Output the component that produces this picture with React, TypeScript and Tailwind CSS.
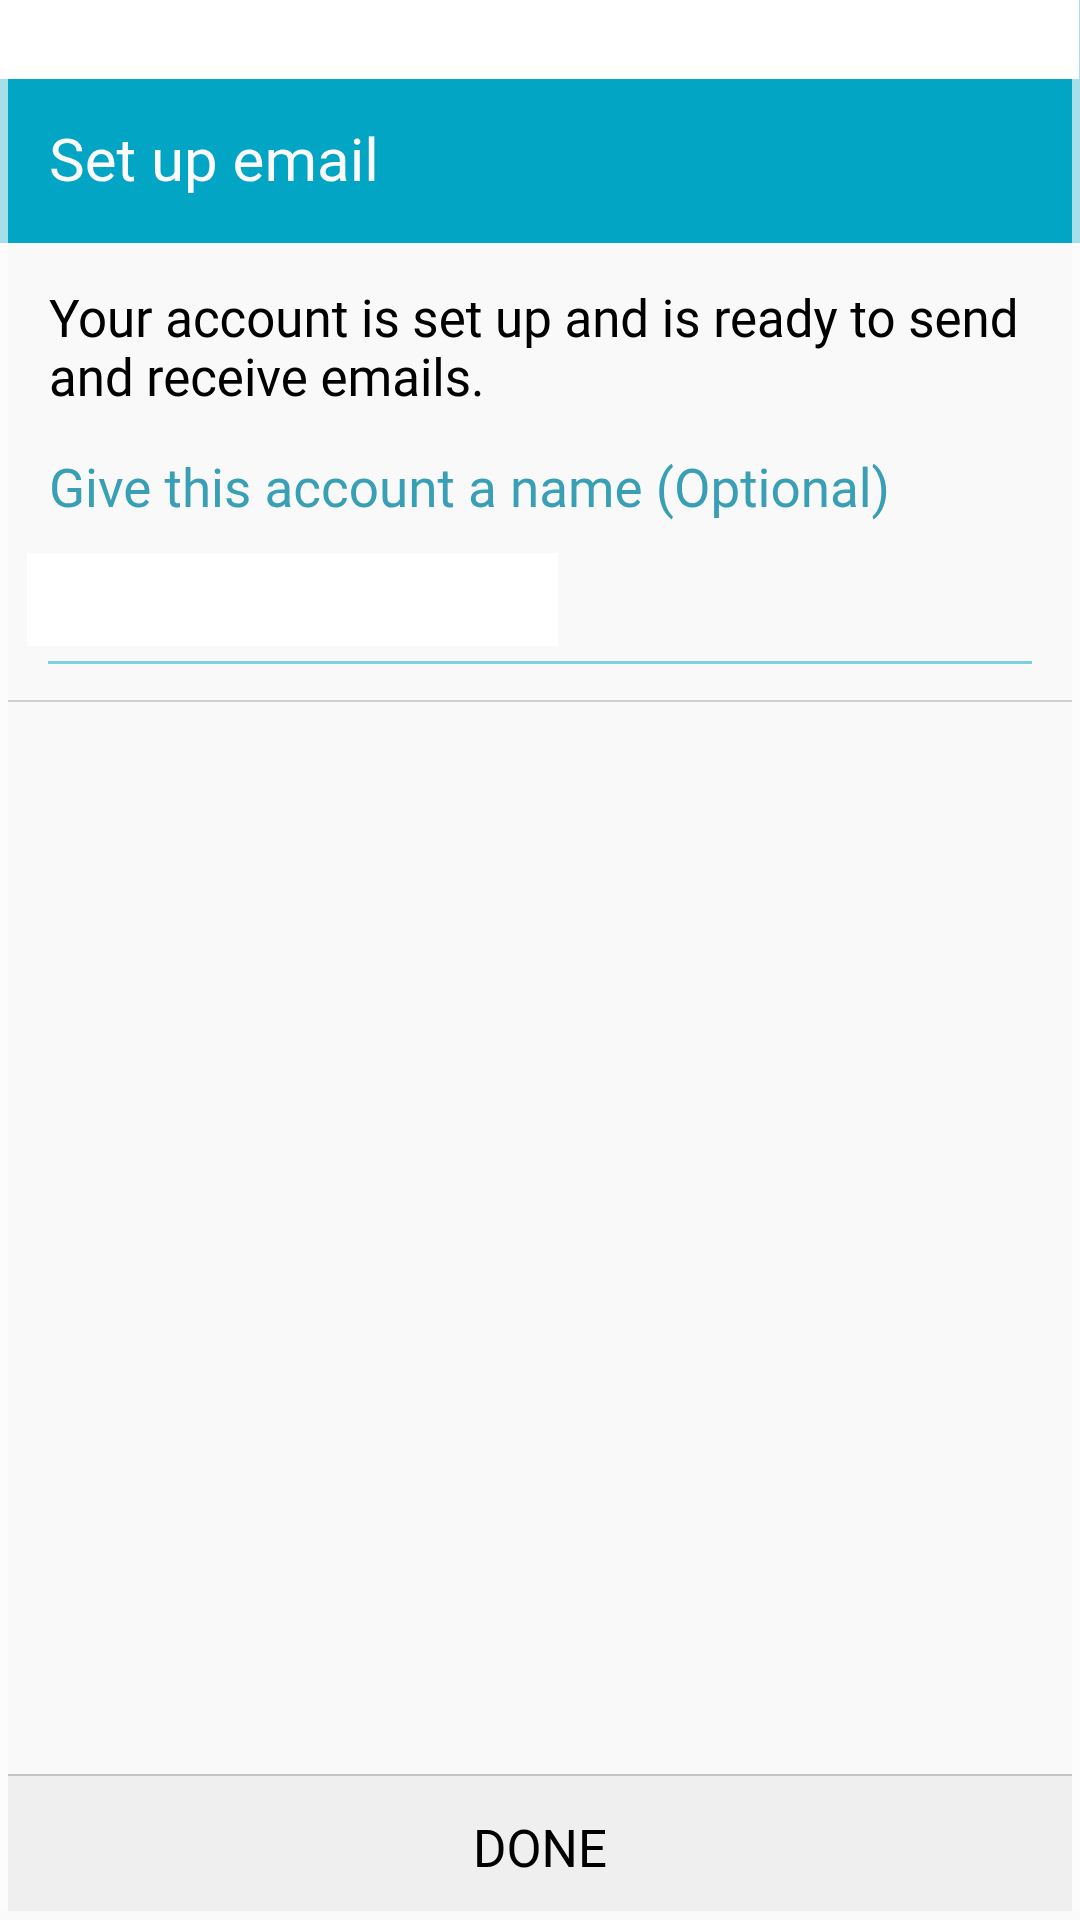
export default function App() {
  return (
    <div className="flex h-[1920px] w-[1080px] flex-col bg-white font-['Roboto',sans-serif]">
      {/* top blank area */}
      <div className="flex h-[79px] justify-end bg-white">
        <div className="w-px bg-[#a6dfe9]" />
      </div>

      {/* header */}
      <div className="flex h-[164px] bg-[#a6dfe9]">
        <div className="mx-2 flex flex-1 items-center bg-[#03a5c5] pl-[41px]">
          <span className="text-[60px] leading-[70px] text-[#fafafa]">Set up email</span>
        </div>
      </div>

      {/* body */}
      <div className="flex flex-1 bg-[#fcfcfc]">
        <div className="mx-2 flex flex-1 flex-col bg-[#f9f9f9]">
          <div className="pt-[47px] pl-[41px] pr-[40px]">
            <p className="text-[51px] leading-[59px] text-black">
              Your account is set up and is ready to send and receive emails.
            </p>
            <p className="mt-[49px] text-[53px] leading-[64px] text-[#389fb5]">
              Give this account a name (Optional)
            </p>
          </div>
          <div className="mt-[32px] ml-[19px] h-[93px] w-[531px] bg-white" />
          <div className="mt-[15px] ml-[40px] h-[3px] w-[984px] bg-[#7ecfdf]" />
          <div className="mt-[36px] h-[2px] bg-[#d0d0d0]" />
          <div className="flex-1" />
          <div className="h-[2px] bg-[#c4c4c4]" />
          <div className="h-[135px] bg-[#efefef] pt-[44px] text-center">
            <span className="text-[51px] leading-[60px] text-black">DONE</span>
          </div>
        </div>
      </div>
      <div className="h-[9px] bg-[#fafafa]" />
    </div>
  );
}
